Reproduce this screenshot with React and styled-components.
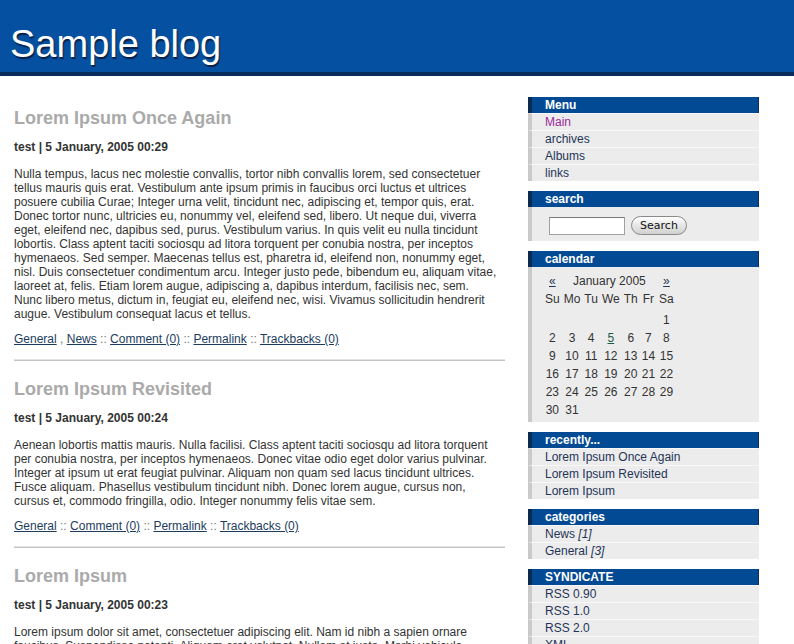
import React from 'react';
import styled, { createGlobalStyle } from 'styled-components';

const GlobalStyle = createGlobalStyle`
  html, body {
    margin: 0;
    padding: 0;
    background: #fff;
    font-family: "Liberation Sans", Arial, Helvetica, sans-serif;
    font-size: 12px;
    color: #333;
  }
`;

// Header
const Header = styled.header`
  height: 72px;
  background-color: #0550a1;
  border-bottom: 4px solid #0a2c5a;
  padding-left: 10px;
  box-sizing: content-box;
`;

const BlogTitle = styled.h1`
  margin: 0;
  padding-top: 23px;
  font-size: 38px;
  line-height: 42px;
  font-weight: normal;
  color: #fff;
  text-shadow: 1px 2px 1px #0a2146;
`;

// Layout
const Page = styled.div`
  display: flex;
  align-items: flex-start;
  padding: 0 14px;
`;

const Main = styled.main`
  width: 491px;
  padding-top: 31px;
`;

const Sidebar = styled.aside`
  width: 231px;
  margin-left: 23px;
  padding-top: 21px;
  display: flex;
  flex-direction: column;
  gap: 10px;
`;

// Posts
const Post = styled.article``;

const PostTitle = styled.h2`
  margin: 0 0 11px;
  font-size: 18px;
  line-height: 22px;
  font-weight: bold;
  color: #aaaaaa;
`;

const Meta = styled.div`
  margin-bottom: 13px;
  font-size: 12px;
  line-height: 14px;
  font-weight: bold;
  color: #333;
`;

const Body = styled.p`
  margin: 0 0 11px;
  font-size: 12px;
  line-height: 14px;
  color: #333;
`;

const Links = styled.div`
  font-size: 12px;
  line-height: 14px;
  color: #777;
`;

const PostLink = styled.a`
  color: #1c3c5e;
  text-decoration: underline;
`;

const Divider = styled.hr`
  margin: 13px 0 17px;
  border: 0;
  border-top: 1px solid #e2e2e2;
  border-bottom: 1px solid #c4c4c4;
  height: 0;
`;

// Sidebar boxes
const Box = styled.section``;

const BoxTitle = styled.h3`
  margin: 0;
  height: 16px;
  line-height: 16px;
  font-size: 12px;
  font-weight: bold;
  color: #fff;
  background-color: #034a94;
  border-left: 4px solid #0a2a50;
  border-right: 1px solid #0a2f5c;
  padding-left: 13px;
  text-transform: ${p => (p.$upper ? 'uppercase' : 'none')};
`;

const ItemList = styled.ul`
  list-style: none;
  margin: 0;
  padding: 0;
`;

const Item = styled.li`
  height: 16px;
  line-height: 16px;
  border-top: 1px solid #f8f8f8;
  border-left: 4px solid #cacaca;
  background-color: #ececec;
  padding-left: 13px;
  font-size: 12px;
  color: #1f3558;
`;

const ItemLink = styled.a`
  color: ${p => (p.$visited ? '#9a2a9a' : '#1f3558')};
  text-decoration: none;
`;

const Count = styled.em`
  font-style: italic;
`;

const Panel = styled.div`
  background-color: #ececec;
  border-left: 4px solid #cacaca;
  padding: ${p => p.$pad || '0'};
`;

const SearchRow = styled.form`
  display: flex;
  align-items: center;
  gap: 6px;
  margin: 0;
`;

const SearchInput = styled.input`
  width: 76px;
  height: 18px;
  box-sizing: border-box;
  border: 1px solid #a0a0a0;
  border-top-color: #777;
  background: #fff;
  padding: 0 2px;
  font-size: 12px;
`;

const SearchButton = styled.button`
  width: 56px;
  height: 19px;
  box-sizing: border-box;
  border: 1px solid #8a8a8a;
  border-radius: 10px;
  background: linear-gradient(#ffffff, #e4e4e4 55%, #d0d0d0);
  font-family: "DejaVu Sans", "Liberation Sans", sans-serif;
  font-size: 11px;
  color: #111;
  padding: 0;
  line-height: 16px;
`;

const Calendar = styled.table`
  border-collapse: separate;
  border-spacing: 4px 4px;
  font-size: 12px;
  color: #333;
`;

const Cell = styled.td`
  padding: 0;
  height: 14px;
  line-height: 14px;
  text-align: center;
  padding-bottom: ${p => (p.$extra ? '3px' : '0')};
`;

const CalLink = styled.a`
  color: ${p => (p.$day ? '#1d5a48' : '#1f3558')};
  text-decoration: underline;
`;

// Line breaks follow the original page's wrapping
const posts = [
  {
    title: 'Lorem Ipsum Once Again',
    meta: 'test | 5 January, 2005 00:29',
    lines: [
      'Nulla tempus, lacus nec molestie convallis, tortor nibh convallis lorem, sed consectetuer',
      'tellus mauris quis erat. Vestibulum ante ipsum primis in faucibus orci luctus et ultrices',
      'posuere cubilia Curae; Integer urna velit, tincidunt nec, adipiscing et, tempor quis, erat.',
      'Donec tortor nunc, ultricies eu, nonummy vel, eleifend sed, libero. Ut neque dui, viverra',
      'eget, eleifend nec, dapibus sed, purus. Vestibulum varius. In quis velit eu nulla tincidunt',
      'lobortis. Class aptent taciti sociosqu ad litora torquent per conubia nostra, per inceptos',
      'hymenaeos. Sed semper. Maecenas tellus est, pharetra id, eleifend non, nonummy eget,',
      'nisl. Duis consectetuer condimentum arcu. Integer justo pede, bibendum eu, aliquam vitae,',
      'laoreet at, felis. Etiam lorem augue, adipiscing a, dapibus interdum, facilisis nec, sem.',
      'Nunc libero metus, dictum in, feugiat eu, eleifend nec, wisi. Vivamus sollicitudin hendrerit',
      'augue. Vestibulum consequat lacus et tellus.',
    ],
    cats: ['General', 'News'],
  },
  {
    title: 'Lorem Ipsum Revisited',
    meta: 'test | 5 January, 2005 00:24',
    lines: [
      'Aenean lobortis mattis mauris. Nulla facilisi. Class aptent taciti sociosqu ad litora torquent',
      'per conubia nostra, per inceptos hymenaeos. Donec vitae odio eget dolor varius pulvinar.',
      'Integer at ipsum ut erat feugiat pulvinar. Aliquam non quam sed lacus tincidunt ultrices.',
      'Fusce aliquam. Phasellus vestibulum tincidunt nibh. Donec lorem augue, cursus non,',
      'cursus et, commodo fringilla, odio. Integer nonummy felis vitae sem.',
    ],
    cats: ['General'],
  },
  {
    title: 'Lorem Ipsum',
    meta: 'test | 5 January, 2005 00:23',
    lines: [
      'Lorem ipsum dolor sit amet, consectetuer adipiscing elit. Nam id nibh a sapien ornare',
      'faucibus. Suspendisse potenti. Aliquam erat volutpat. Nullam at justo. Morbi vehicula,',
      'mauris sit amet ornare lacinia, arcu lorem interdum nisl, ac tempor arcu ligula vitae diam.',
    ],
    cats: ['General'],
  },
];

const weeks = [
  ['', '', '', '', '', '', '1'],
  ['2', '3', '4', '5', '6', '7', '8'],
  ['9', '10', '11', '12', '13', '14', '15'],
  ['16', '17', '18', '19', '20', '21', '22'],
  ['23', '24', '25', '26', '27', '28', '29'],
  ['30', '31', '', '', '', '', ''],
];

const PostEntry = ({ post, last }) => (
  <Post>
    <PostTitle>{post.title}</PostTitle>
    <Meta>{post.meta}</Meta>
    <Body>
      {post.lines.map((l, i) => (
        <React.Fragment key={i}>
          {i > 0 && <br />}
          {l}
        </React.Fragment>
      ))}
    </Body>
    <Links>
      {post.cats.map((c, i) => (
        <React.Fragment key={c}>
          {i > 0 && ' , '}
          <PostLink href="#">{c}</PostLink>
        </React.Fragment>
      ))}
      {' :: '}
      <PostLink href="#">Comment (0)</PostLink>
      {' :: '}
      <PostLink href="#">Permalink</PostLink>
      {' :: '}
      <PostLink href="#">Trackbacks (0)</PostLink>
    </Links>
    {!last && <Divider />}
  </Post>
);

const App = () => (
  <>
    <GlobalStyle />
    <Header>
      <BlogTitle>Sample blog</BlogTitle>
    </Header>
    <Page>
      <Main>
        {posts.map((p, i) => (
          <PostEntry key={p.title} post={p} last={i === posts.length - 1} />
        ))}
      </Main>
      <Sidebar>
        <Box>
          <BoxTitle>Menu</BoxTitle>
          <ItemList>
            <Item><ItemLink href="#" $visited>Main</ItemLink></Item>
            <Item><ItemLink href="#">archives</ItemLink></Item>
            <Item><ItemLink href="#">Albums</ItemLink></Item>
            <Item><ItemLink href="#">links</ItemLink></Item>
          </ItemList>
        </Box>

        <Box>
          <BoxTitle>search</BoxTitle>
          <Panel $pad="9px 0 6px 17px">
            <SearchRow onSubmit={e => e.preventDefault()}>
              <SearchInput type="text" />
              <SearchButton type="submit">Search</SearchButton>
            </SearchRow>
          </Panel>
        </Box>

        <Box>
          <BoxTitle>calendar</BoxTitle>
          <Panel $pad="3px 0 1px 9px">
            <Calendar>
              <tbody>
                <tr>
                  <Cell><CalLink href="#">«</CalLink></Cell>
                  <Cell colSpan={5}>January 2005</Cell>
                  <Cell><CalLink href="#">»</CalLink></Cell>
                </tr>
                <tr>
                  {['Su', 'Mo', 'Tu', 'We', 'Th', 'Fr', 'Sa'].map(d => (
                    <Cell key={d} $extra>{d}</Cell>
                  ))}
                </tr>
                {weeks.map((w, i) => (
                  <tr key={i}>
                    {w.map((d, j) =>
                      d === '5' ? (
                        <Cell key={j}><CalLink href="#" $day>5</CalLink></Cell>
                      ) : (
                        <Cell key={j}>{d}</Cell>
                      )
                    )}
                  </tr>
                ))}
              </tbody>
            </Calendar>
          </Panel>
        </Box>

        <Box>
          <BoxTitle>recently...</BoxTitle>
          <ItemList>
            <Item><ItemLink href="#">Lorem Ipsum Once Again</ItemLink></Item>
            <Item><ItemLink href="#">Lorem Ipsum Revisited</ItemLink></Item>
            <Item><ItemLink href="#">Lorem Ipsum</ItemLink></Item>
          </ItemList>
        </Box>

        <Box>
          <BoxTitle>categories</BoxTitle>
          <ItemList>
            <Item><ItemLink href="#">News</ItemLink> <Count>[1]</Count></Item>
            <Item><ItemLink href="#">General</ItemLink> <Count>[3]</Count></Item>
          </ItemList>
        </Box>

        <Box>
          <BoxTitle $upper>Syndicate</BoxTitle>
          <ItemList>
            <Item><ItemLink href="#">RSS 0.90</ItemLink></Item>
            <Item><ItemLink href="#">RSS 1.0</ItemLink></Item>
            <Item><ItemLink href="#">RSS 2.0</ItemLink></Item>
            <Item><ItemLink href="#">XML</ItemLink></Item>
          </ItemList>
        </Box>
      </Sidebar>
    </Page>
  </>
);

export default App;
